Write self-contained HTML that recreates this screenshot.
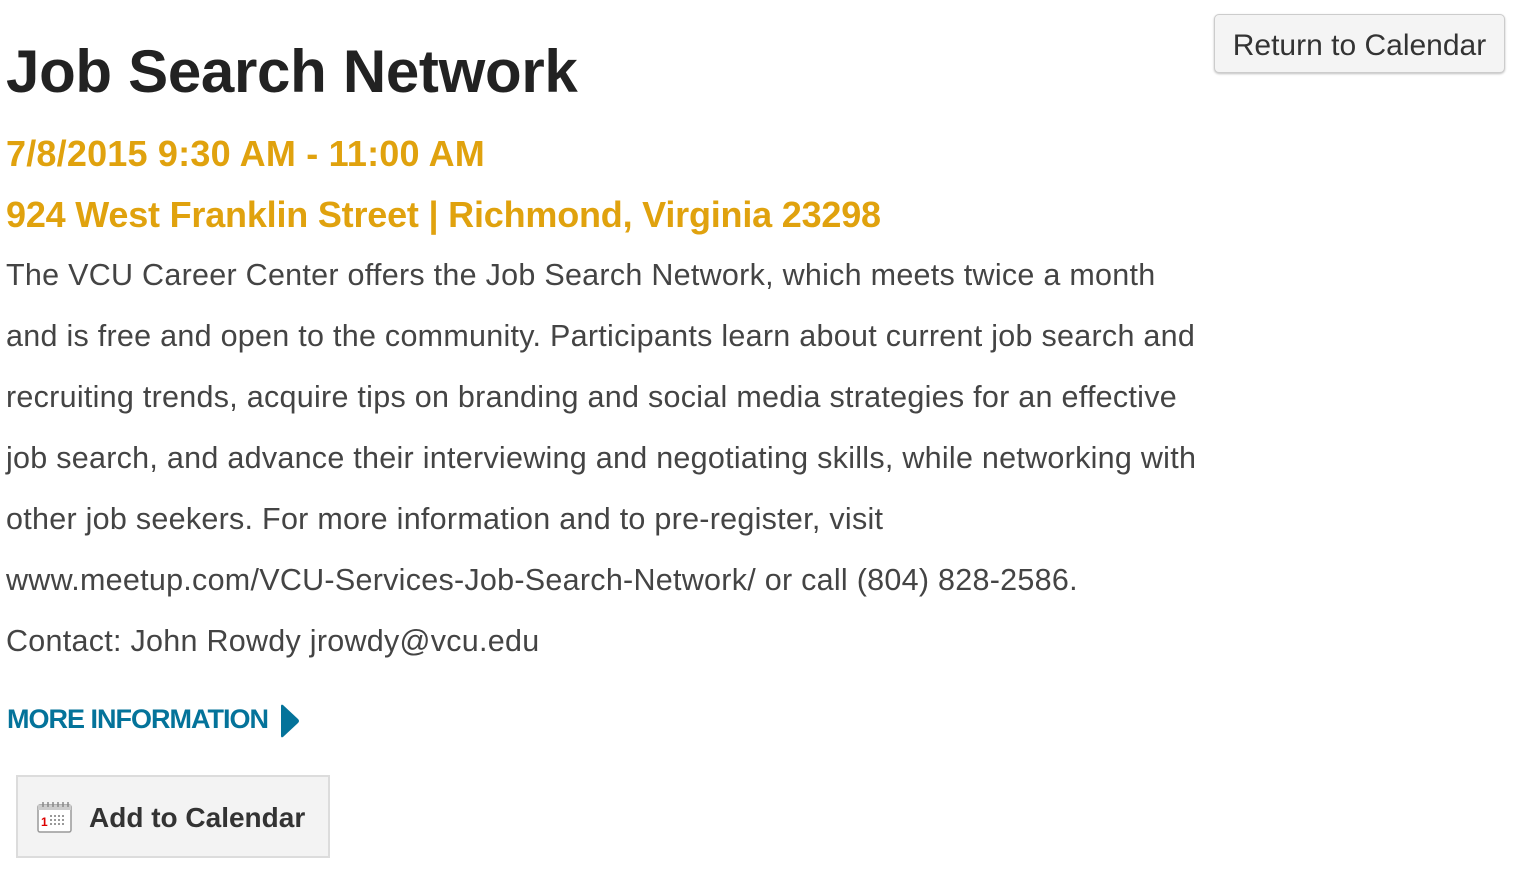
<!DOCTYPE html>
<html><head><meta charset="utf-8"><style>
body{margin:0;background:#fff;font-family:"Liberation Sans",Arial,sans-serif;width:1518px;height:870px;overflow:hidden;position:relative}
.abs{position:absolute;white-space:nowrap}
h1{position:absolute;left:6px;top:37px;margin:0;font-size:60px;font-weight:bold;color:#222;letter-spacing:-0.3px}
.or{color:#e0a20e;font-weight:bold;font-size:36px;letter-spacing:-0.2px}
.body{left:6px;top:245px;font-size:30.5px;color:#444;line-height:61px;letter-spacing:0.27px}
.ret{position:absolute;left:1214px;top:14px;width:291px;height:59px;border:1px solid #ccc;border-radius:5px;background:#f4f4f4;box-shadow:0 1px 2px rgba(0,0,0,.25);font-size:30px;color:#333;text-align:center;line-height:62px;box-sizing:border-box}
.more{left:7px;top:704px;font-size:27px;font-weight:bold;color:#04739a;letter-spacing:-1px}
.add{position:absolute;left:16px;top:775px;width:314px;height:83px;box-sizing:border-box;border:2px solid #dcdcdc;background:#f3f3f3}
</style></head><body>
<div class="ret">Return to Calendar</div>
<h1>Job Search Network</h1>
<div class="abs or" style="left:6px;top:133px;letter-spacing:0.2px">7/8/2015 9:30 AM - 11:00 AM</div>
<div class="abs or" style="left:6px;top:194px">924 West Franklin Street | Richmond, Virginia 23298</div>
<div class="abs body">The VCU Career Center offers the Job Search Network, which meets twice a month<br>and is free and open to the community. Participants learn about current job search and<br>recruiting trends, acquire tips on branding and social media strategies for an effective<br>job search, and advance their interviewing and negotiating skills, while networking with<br>other job seekers. For more information and to pre-register, visit<br>www.meetup.com/VCU-Services-Job-Search-Network/ or call (804) 828-2586.<br>Contact: John Rowdy jrowdy@vcu.edu</div>
<div class="abs more">MORE INFORMATION</div>
<svg class="abs" style="left:280px;top:704px" width="20" height="34"><path d="M1 2 Q1 0 3 1 L18 15 Q20 17 18 19 L3 33 Q1 34 1 32 Z" fill="#04739a"/></svg>
<div class="add">
<svg style="position:absolute;left:19px;top:25px" width="36" height="32"><rect x="1" y="3" width="33" height="27" rx="2" fill="#fff" stroke="#999" stroke-width="1.5"/><rect x="1" y="3" width="33" height="5" fill="#ccc"/><g stroke="#888" stroke-width="1.5"><line x1="6" y1="0" x2="6" y2="5"/><line x1="11" y1="0" x2="11" y2="5"/><line x1="16" y1="0" x2="16" y2="5"/><line x1="21" y1="0" x2="21" y2="5"/><line x1="26" y1="0" x2="26" y2="5"/><line x1="31" y1="0" x2="31" y2="5"/></g><text x="4" y="24" font-size="12" font-weight="bold" fill="#d00" font-family="Liberation Sans">1</text><g fill="#999"><rect x="13" y="13" width="2" height="2"/><rect x="17" y="13" width="2" height="2"/><rect x="21" y="13" width="2" height="2"/><rect x="25" y="13" width="2" height="2"/><rect x="13" y="17" width="2" height="2"/><rect x="17" y="17" width="2" height="2"/><rect x="21" y="17" width="2" height="2"/><rect x="25" y="17" width="2" height="2"/><rect x="13" y="21" width="2" height="2"/><rect x="17" y="21" width="2" height="2"/><rect x="21" y="21" width="2" height="2"/><rect x="25" y="21" width="2" height="2"/></g></svg>
<div class="abs" style="left:71px;top:25px;font-size:28px;font-weight:bold;color:#333">Add to Calendar</div>
</div>
</body></html>
